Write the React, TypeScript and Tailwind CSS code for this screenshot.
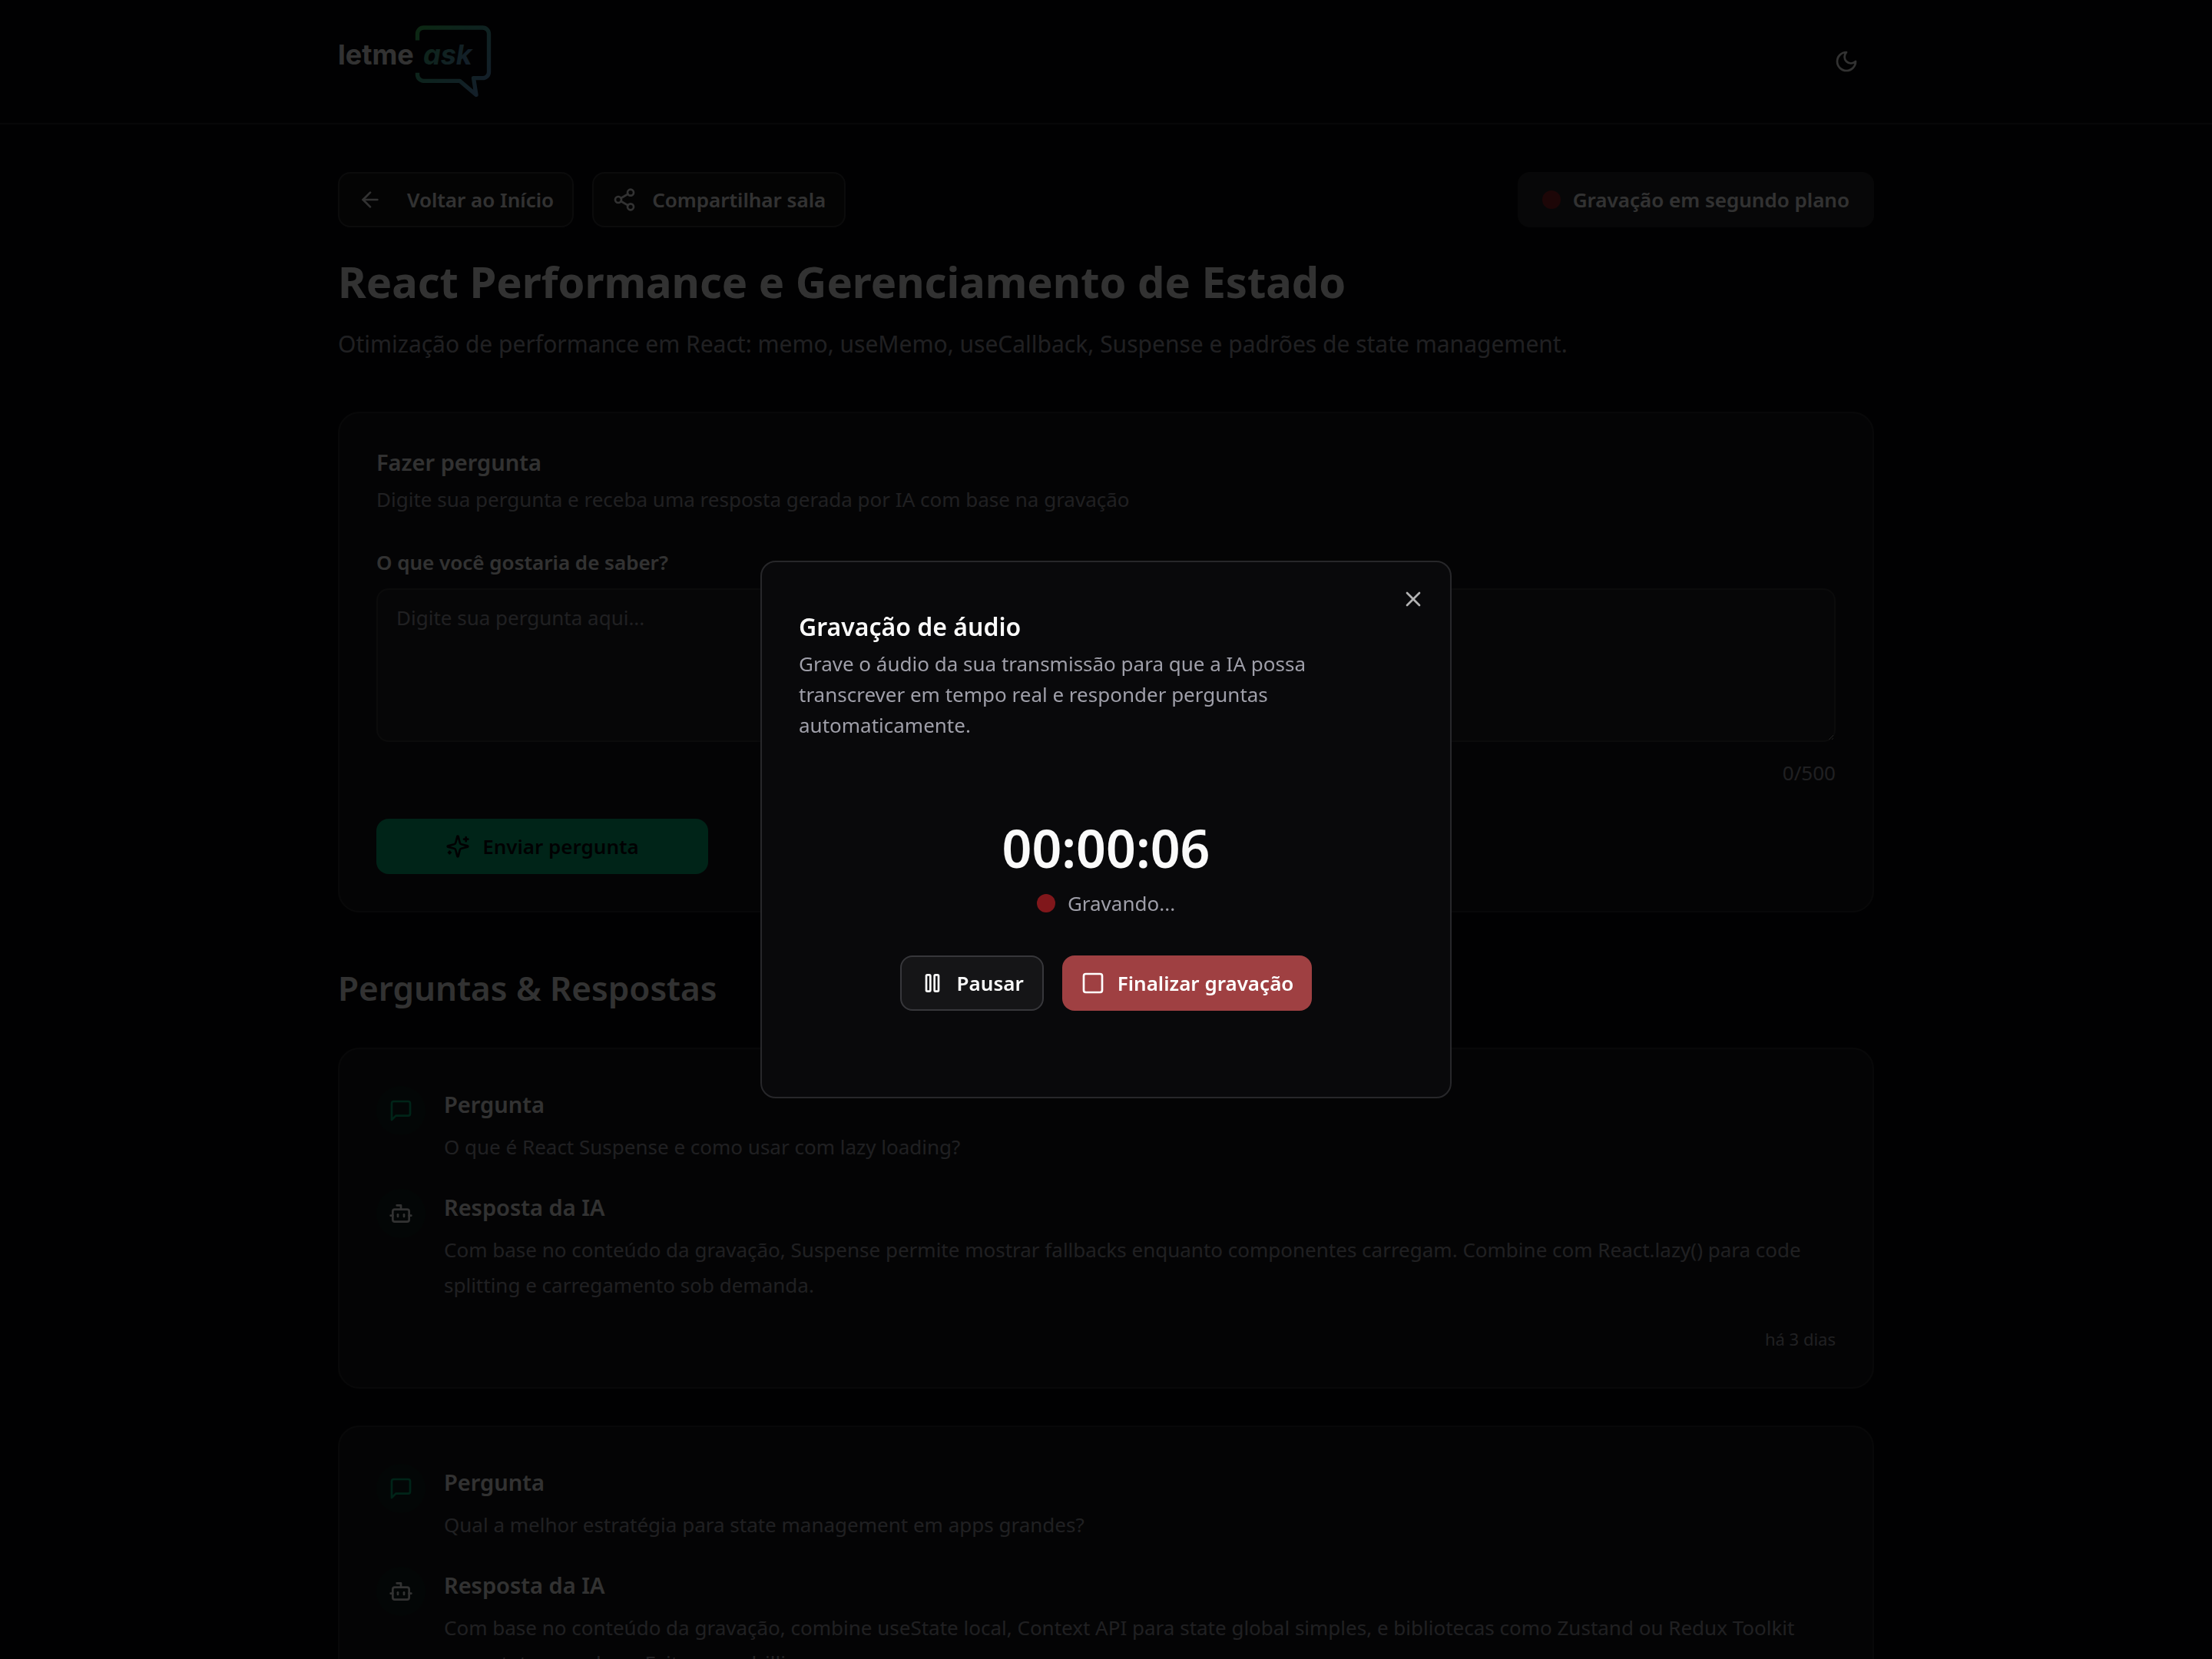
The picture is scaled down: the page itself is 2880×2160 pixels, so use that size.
import type { ReactNode, SVGProps } from "react";

function Icon({ children, ...props }: SVGProps<SVGSVGElement>) {
  return (
    <svg
      viewBox="0 0 24 24"
      fill="none"
      stroke="currentColor"
      strokeWidth={2}
      strokeLinecap="round"
      strokeLinejoin="round"
      aria-hidden="true"
      className="size-8 shrink-0"
      {...props}
    >
      {children}
    </svg>
  );
}

const ArrowLeftIcon = () => (
  <Icon>
    <path d="m12 19-7-7 7-7" />
    <path d="M19 12H5" />
  </Icon>
);

const ShareIcon = () => (
  <Icon>
    <circle cx="18" cy="5" r="3" />
    <circle cx="6" cy="12" r="3" />
    <circle cx="18" cy="19" r="3" />
    <path d="m8.59 13.51 6.83 3.98" />
    <path d="m15.41 6.51-6.82 3.98" />
  </Icon>
);

const MoonIcon = () => (
  <Icon>
    <path d="M12 3a6 6 0 0 0 9 9 9 9 0 1 1-9-9Z" />
  </Icon>
);

const SparklesIcon = () => (
  <Icon>
    <path d="M9.937 15.5A2 2 0 0 0 8.5 14.063l-6.135-1.582a.5.5 0 0 1 0-.962L8.5 9.936A2 2 0 0 0 9.937 8.5l1.582-6.135a.5.5 0 0 1 .963 0L14.063 8.5A2 2 0 0 0 15.5 9.937l6.135 1.581a.5.5 0 0 1 0 .964L15.5 14.063a2 2 0 0 0-1.437 1.437l-1.582 6.135a.5.5 0 0 1-.963 0z" />
    <path d="M20 3v4" />
    <path d="M22 5h-4" />
    <path d="M4 17v2" />
    <path d="M5 18H3" />
  </Icon>
);

const MessageIcon = () => (
  <Icon>
    <path d="M21 15a2 2 0 0 1-2 2H7l-4 4V5a2 2 0 0 1 2-2h14a2 2 0 0 1 2 2z" />
  </Icon>
);

const BotIcon = () => (
  <Icon>
    <path d="M12 8V4H8" />
    <rect width="16" height="12" x="4" y="8" rx="2" />
    <path d="M2 14h2" />
    <path d="M20 14h2" />
    <path d="M15 13v2" />
    <path d="M9 13v2" />
  </Icon>
);

const CloseIcon = () => (
  <Icon>
    <path d="M18 6 6 18" />
    <path d="m6 6 12 12" />
  </Icon>
);

const PauseIcon = () => (
  <Icon>
    <rect x="14" y="4" width="4" height="16" rx="1" />
    <rect x="6" y="4" width="4" height="16" rx="1" />
  </Icon>
);

const SquareIcon = () => (
  <Icon>
    <rect width="18" height="18" x="3" y="3" rx="2" />
  </Icon>
);

function Logo() {
  return (
    <svg viewBox="0 0 200 96" className="h-24 w-[200px]" role="img" aria-label="letme ask">
      <defs>
        <linearGradient id="bubble" x1="104" y1="4" x2="190" y2="80" gradientUnits="userSpaceOnUse">
          <stop offset="0" stopColor="#3cc45f" />
          <stop offset="0.5" stopColor="#46ad9c" />
          <stop offset="1" stopColor="#6299cc" />
        </linearGradient>
        <linearGradient id="word" x1="112" y1="26" x2="165" y2="56" gradientUnits="userSpaceOnUse">
          <stop offset="0" stopColor="#45b880" />
          <stop offset="1" stopColor="#6299cc" />
        </linearGradient>
      </defs>
      <path
        d="M103.5 20.5V12a8 8 0 0 1 8-8h77a8 8 0 0 1 8 8v49.7a8 8 0 0 1-8 8H176.5L180 91.5 158.5 73.3H111.5a8 8 0 0 1-8-8V62.7"
        fill="none"
        stroke="url(#bubble)"
        strokeWidth="5.3"
        strokeLinejoin="round"
      />
      <text x="0" y="51.5" fontSize="36" fill="#fafafa" className="font-[Inter] font-bold">
        letme
      </text>
      <text
        x="111"
        y="51.5"
        fontSize="36"
        fill="url(#word)"
        className="font-[Inter] font-bold italic [font-feature-settings:'cv11']"
      >
        ask
      </text>
    </svg>
  );
}

const outlineButton =
  "flex h-18 items-center rounded-2xl border-2 border-[#37373b] bg-[#151517] px-6 text-[26px] leading-10 font-semibold";

function Card({ children }: { children: ReactNode }) {
  return <section className="rounded-[28px] border-2 border-[#2b2b2e] bg-[#18181b] p-12">{children}</section>;
}

function Entry({
  icon,
  tone,
  title,
  children,
}: {
  icon: ReactNode;
  tone: string;
  title: string;
  children: ReactNode;
}) {
  return (
    <div className="flex gap-6">
      <div className={`flex size-16 shrink-0 items-center justify-center rounded-full bg-[#0f221e] ${tone}`}>
        {icon}
      </div>
      <div className="min-w-0 flex-1">
        <h3 className="text-[29px] leading-12 font-semibold">{title}</h3>
        <p className="mt-2 text-[26px] leading-[46px] text-[#9f9fa9]">{children}</p>
      </div>
    </div>
  );
}

const questions = [
  {
    question: "O que é React Suspense e como usar com lazy loading?",
    answer:
      "Com base no conteúdo da gravação, Suspense permite mostrar fallbacks enquanto componentes carregam. Combine com React.lazy() para code splitting e carregamento sob demanda.",
    time: "há 3 dias",
  },
  {
    question: "Qual a melhor estratégia para state management em apps grandes?",
    answer:
      "Com base no conteúdo da gravação, combine useState local, Context API para state global simples, e bibliotecas como Zustand ou Redux Toolkit para state complexo. Evite prop drilling.",
    time: "há 3 dias",
  },
];

function RecordingDialog() {
  return (
    <div className="fixed inset-0 flex items-center justify-center bg-black/80">
      <div
        role="dialog"
        aria-modal="true"
        aria-labelledby="dialog-title"
        aria-describedby="dialog-description"
        className="relative w-full max-w-[900px] rounded-[20px] border-2 border-[#27272a] bg-[#09090b] px-12 pt-16 pb-28 shadow-lg"
      >
        <h2 id="dialog-title" className="text-[32px] leading-10 font-semibold">
          Gravação de áudio
        </h2>
        <p id="dialog-description" className="mt-2 max-w-[760px] text-[26px] leading-10 text-[#9f9fa9]">
          Grave o áudio da sua transmissão para que a IA possa transcrever em tempo real e responder perguntas
          automaticamente.
        </p>
        <div className="mt-26 flex flex-col items-center">
          <p className="text-[68px] leading-18 font-semibold">00:00:06</p>
          <div className="mt-4 flex items-center gap-4 text-[26px] leading-10 text-[#9f9fa9]">
            <span className="size-6 rounded-full bg-[#80171b]" />
            Gravando...
          </div>
          <div className="mt-12 flex gap-6">
            <button type="button" className={`${outlineButton} gap-4`}>
              <PauseIcon />
              Pausar
            </button>
            <button
              type="button"
              className="flex h-18 items-center gap-4 rounded-2xl bg-[#9f4042] px-6 text-[26px] leading-10 font-semibold text-white"
            >
              <SquareIcon />
              Finalizar gravação
            </button>
          </div>
        </div>
        <button type="button" aria-label="Fechar" className="absolute top-8 right-8 opacity-70">
          <CloseIcon />
        </button>
      </div>
    </div>
  );
}

export default function App() {
  return (
    <div className="h-screen overflow-hidden bg-[#09090b] font-['Noto_Sans',sans-serif] text-[#fafafa] [color-scheme:dark]">
      <header className="border-b-2 border-[#27272a]">
        <div className="mx-auto flex h-40 w-full max-w-[2096px] items-center justify-between px-12">
          <a href="#inicio">
            <Logo />
          </a>
          <button type="button" aria-label="Alternar tema" className="flex size-18 items-center justify-center">
            <MoonIcon />
          </button>
        </div>
      </header>

      <main className="mx-auto w-full max-w-[2096px] px-12 pt-[62px]">
        <div className="flex items-center justify-between">
          <div className="flex gap-6">
            <button type="button" className={`${outlineButton} gap-8`}>
              <ArrowLeftIcon />
              Voltar ao Início
            </button>
            <button type="button" className={`${outlineButton} gap-5`}>
              <ShareIcon />
              Compartilhar sala
            </button>
          </div>
          <button
            type="button"
            className="flex h-18 items-center gap-4 rounded-2xl bg-[#27272a] px-8 text-[26px] leading-10 font-semibold"
          >
            <span className="size-6 rounded-full bg-[#911e25]" />
            Gravação em segundo plano
          </button>
        </div>

        <h1 className="mt-8 text-[56px] leading-[76px] font-bold">React Performance e Gerenciamento de Estado</h1>
        <p className="mt-5 mb-16 text-[30px] leading-12 text-[#9f9fa9]">
          Otimização de performance em React: memo, useMemo, useCallback, Suspense e padrões de state management.
        </p>

        <Card>
          <h2 className="text-[29px] leading-8 font-semibold">Fazer pergunta</h2>
          <p className="mt-3 text-[26px] leading-10 text-[#9f9fa9]">
            Digite sua pergunta e receba uma resposta gerada por IA com base na gravação
          </p>
          <form className="mt-12">
            <label htmlFor="question" className="block text-[26px] leading-7 font-semibold">
              O que você gostaria de saber?
            </label>
            <textarea
              id="question"
              placeholder="Digite sua pergunta aqui..."
              className="mt-5 block h-[200px] w-full resize-y rounded-2xl border-2 border-[#37373b] bg-[#212124] px-6 py-4 text-[26px] leading-10 placeholder:text-[#9f9fa9]"
            />
            <p className="mt-5 text-right text-[26px] leading-10 text-[#9f9fa9]">0/500</p>
            <button
              type="submit"
              className="mt-10 flex h-18 w-full max-w-[432px] items-center justify-center gap-4 rounded-2xl bg-[#00b47a] text-[26px] leading-10 font-semibold text-[#09090b]"
            >
              <SparklesIcon />
              Enviar pergunta
            </button>
          </form>
        </Card>

        <h2 className="mt-17 text-[44px] leading-[60px] font-semibold">Perguntas &amp; Respostas</h2>
        <div className="mt-12 flex flex-col gap-12">
          {questions.map((item) => (
            <Card key={item.question}>
              <div className="flex flex-col gap-8">
                <Entry icon={<MessageIcon />} tone="text-[#00b47a]" title="Pergunta">
                  {item.question}
                </Entry>
                <Entry icon={<BotIcon />} tone="text-[#fafafa]" title="Resposta da IA">
                  {item.answer}
                </Entry>
              </div>
              <p className="mt-8 text-right text-[22px] leading-[30px] text-[#9f9fa9]">{item.time}</p>
            </Card>
          ))}
        </div>
      </main>

      <RecordingDialog />
    </div>
  );
}
